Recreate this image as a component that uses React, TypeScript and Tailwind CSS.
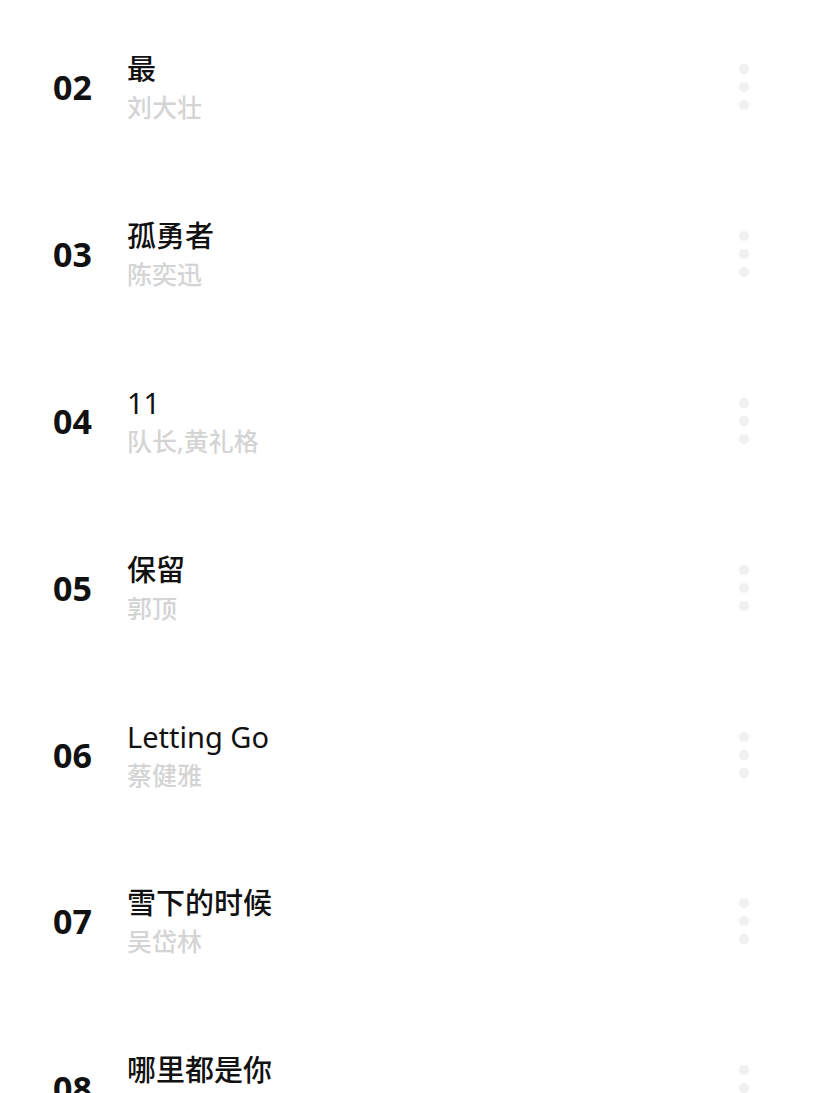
import React from "react";

const songs = [
  { no: "02", title: "最", artist: "刘大壮" },
  { no: "03", title: "孤勇者", artist: "陈奕迅" },
  { no: "04", title: "11", artist: "队长,黄礼格", latin: true },
  { no: "05", title: "保留", artist: "郭顶" },
  { no: "06", title: "Letting Go", artist: "蔡健雅", latin: true },
  { no: "07", title: "雪下的时候", artist: "吴岱林" },
  { no: "08", title: "哪里都是你", artist: "队长" },
];

const font = { fontFamily: '"Noto Sans", "Noto Sans CJK SC", sans-serif' };

const MoreDots = () => (
  <div className="flex flex-col items-center gap-[8px]">
    <span className="block w-[10px] h-[10px] rounded-full bg-[#f0f0f0]" />
    <span className="block w-[10px] h-[10px] rounded-full bg-[#f0f0f0]" />
    <span className="block w-[10px] h-[10px] rounded-full bg-[#f0f0f0]" />
  </div>
);

export default function App() {
  return (
    <div className="w-[820px] h-[1093px] overflow-hidden bg-white" style={font}>
      <div className="pt-[4px]">
        {songs.map((s) => (
          <div key={s.no} className="flex items-center h-[166.8px] pl-[53px] pr-[71px]">
            {/* track number */}
            <div className="w-[74px] text-[34px] font-bold text-[#111] leading-none">
              {s.no}
            </div>

            {/* title + artist */}
            <div className="flex-1 flex flex-col gap-[2px]">
              <span
                className={
                  s.latin
                    ? "text-[29px] leading-[38px] font-normal text-[#111]"
                    : "text-[29px] leading-[38px] font-medium text-[#111]"
                }
              >
                {s.title}
              </span>
              <span className="text-[25px] leading-[34px] font-medium text-[#d4d4d4]">{s.artist}</span>
            </div>

            <MoreDots />
          </div>
        ))}
      </div>
    </div>
  );
}
